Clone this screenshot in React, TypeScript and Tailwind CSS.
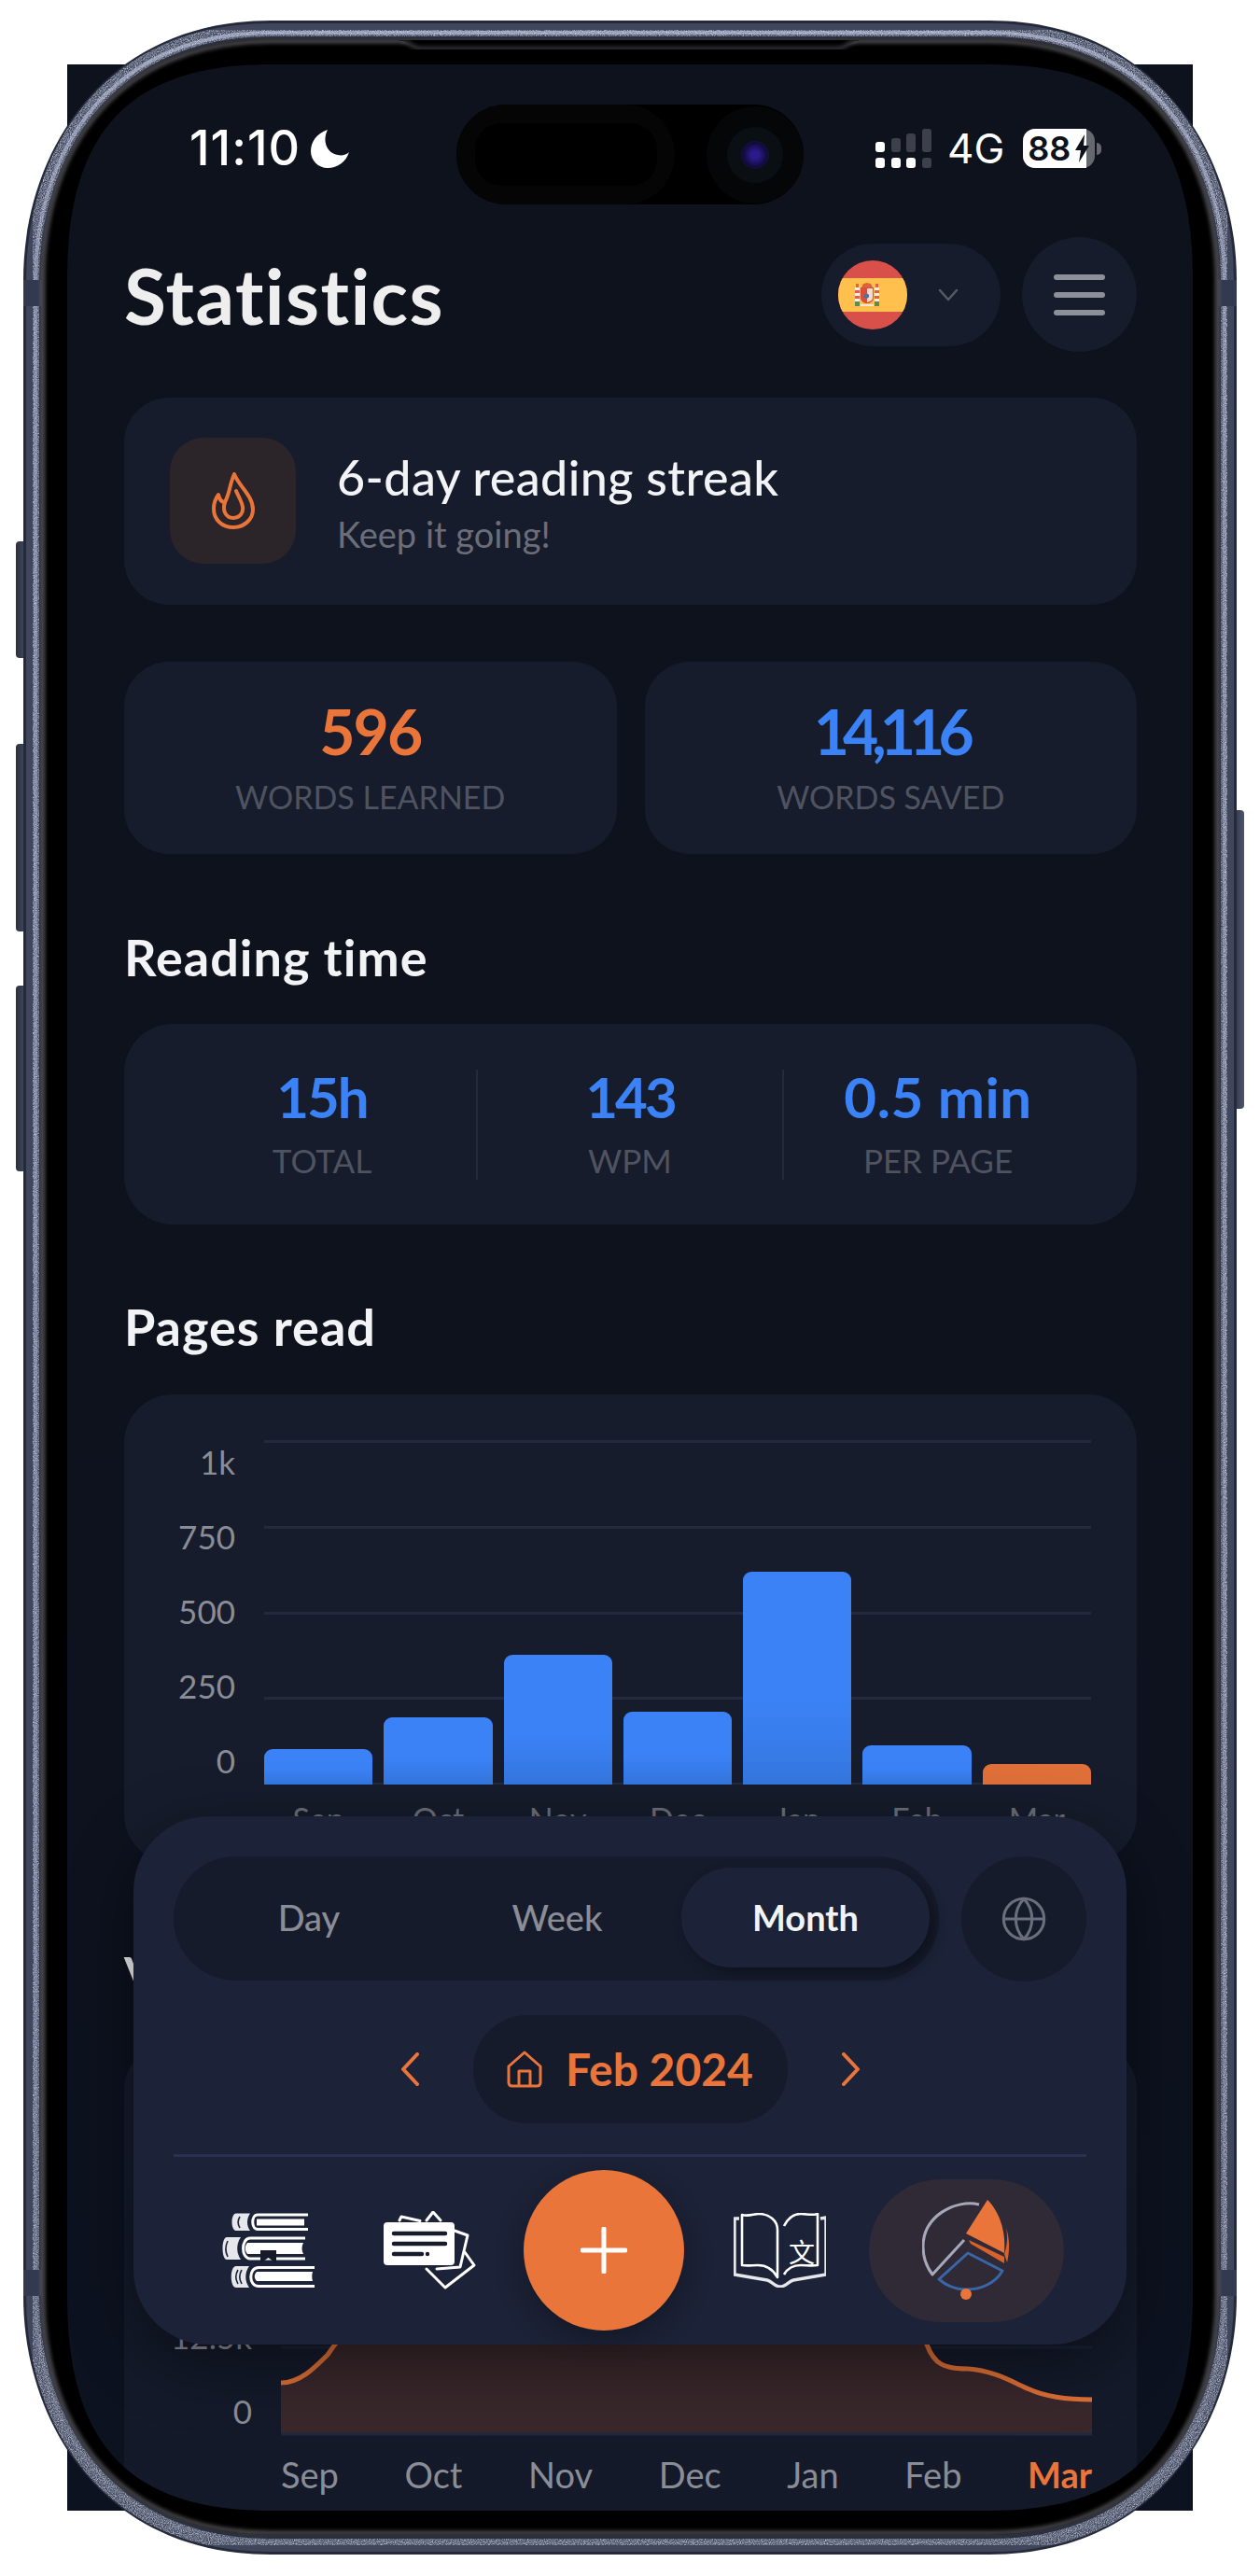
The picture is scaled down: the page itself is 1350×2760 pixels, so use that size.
import React from "react";
import { Globe } from "lucide-react";

const ORANGE = "#ea753b";

const rimOuter =
  "M25 300 C25 165 110 22 290 22 H1060 C1240 22 1325 165 1325 300 V2460 C1325 2595 1240 2737 1060 2737 H290 C110 2737 25 2595 25 2460 Z";
const rimMid =
  "M35 300 C35 165 115 32 290 32 H1060 C1235 32 1315 165 1315 300 V2460 C1315 2595 1235 2727 1060 2727 H290 C115 2727 35 2595 35 2460 Z";
const rimLight =
  "M38 300 C38 163 118 35 290 35 H1060 C1232 35 1312 163 1312 300 V2460 C1312 2597 1232 2724 1060 2724 H290 C118 2724 38 2597 38 2460 Z";
const rimInner =
  "M46 300 C46 160 125 42 290 42 H1060 C1225 42 1304 160 1304 300 V2460 C1304 2600 1225 2716 1060 2716 H290 C125 2716 46 2600 46 2460 Z";
const screenEdge =
  "M72 300 C72 150 130 69 290 69 H1060 C1220 69 1278 150 1278 300 V2460 C1278 2610 1220 2690 1060 2690 H290 C130 2690 72 2610 72 2460 Z";

function PhoneFrame() {
  return (
    <svg className="absolute left-0 top-0 pointer-events-none" width={1350} height={2760} viewBox="0 0 1350 2760">
      <defs>
        <filter id="soft" x="-5%" y="-5%" width="110%" height="110%">
          <feGaussianBlur stdDeviation="2" />
        </filter>
        <filter id="grain" x="0" y="0" width="100%" height="100%">
          <feTurbulence type="fractalNoise" baseFrequency="0.9" numOctaves="2" result="n" />
          <feColorMatrix in="n" type="matrix" values="0 0 0 0 0.72  0 0 0 0 0.76  0 0 0 0 0.88  0 0 0 1.6 -0.55" />
          <feComposite in2="SourceAlpha" operator="in" />
        </filter>
        <linearGradient id="btn" x1="0" y1="0" x2="1" y2="0">
          <stop offset="0" stopColor="#2a2f40" />
          <stop offset="1" stopColor="#4e556b" />
        </linearGradient>
        <linearGradient id="rim" gradientUnits="userSpaceOnUse" x1="0" y1="22" x2="0" y2="2737">
          <stop offset="0" stopColor="#8a92ad" />
          <stop offset="0.1" stopColor="#727a96" />
          <stop offset="0.75" stopColor="#666e88" />
          <stop offset="1" stopColor="#485064" />
        </linearGradient>
      </defs>
      <rect x="17" y="580" width="14" height="125" rx="4" fill="url(#btn)" />
      <rect x="17" y="797" width="14" height="201" rx="4" fill="url(#btn)" />
      <rect x="17" y="1056" width="14" height="199" rx="4" fill="url(#btn)" />
      <rect x="1319" y="868" width="14" height="320" rx="4" fill="url(#btn)" />
      <path d={rimOuter + " " + rimInner} fillRule="evenodd" fill="#252a3a" />
      <path d={rimMid} fill="none" stroke="#40475d" strokeWidth="14" />
      <path d={rimLight} fill="none" stroke="url(#rim)" strokeWidth="4" />
      <path d={rimMid} fill="none" stroke="#000" strokeWidth="14" filter="url(#grain)" />
      <rect x="25" y="300" width="21" height="28" fill="#333a4f" />
      <rect x="1304" y="300" width="21" height="28" fill="#333a4f" />
      <rect x="25" y="2432" width="21" height="28" fill="#333a4f" />
      <rect x="1304" y="2432" width="21" height="28" fill="#333a4f" />
      <path d={rimInner} fill="none" stroke="#141926" strokeWidth="3" />
      <path d={rimInner + " " + screenEdge} fillRule="evenodd" fill="#000" />
      <path d={rimInner + " " + screenEdge} fillRule="evenodd" fill="none" />
      <path d="M46 300C46 160 125 44 290 44H1060C1225 44 1304 160 1304 300V2460C1304 2600 1225 2714 1060 2714H290C125 2714 46 2600 46 2460Z" fill="none" stroke="#5a5a5e" strokeWidth="4" filter="url(#soft)" />
      {/* the small step in the bezel above the island */}
      <path d="M424 43C436 43 438 50 452 50H896C910 50 912 43 924 43Z" fill="#000" />
      <path d="M430 44C440 44 440 52 452 52H896C908 52 908 44 918 44" fill="none" stroke="#4a4a4e" strokeWidth="3" filter="url(#soft)" />
    </svg>
  );
}

function Moon() {
  return (
    <svg width="42" height="42" viewBox="0 0 42 42" className="ml-[11px]">
      <path d="M18 1C6 5 0 14 0 24C0 34 8 42 18 42C29 42 38 35 41 25C38 28 33 29 29 28C17 26 12 13 18 1Z" fill="#fff" />
    </svg>
  );
}

function SignalBars() {
  const gray = "#3d404a";
  return (
    <svg width="66" height="42" viewBox="0 0 66 42">
      <rect x="0" y="14" width="10" height="11" rx="3" fill="#fff" />
      <rect x="17" y="10" width="10" height="15" rx="3" fill={gray} />
      <rect x="33" y="5" width="10" height="20" rx="3" fill={gray} />
      <rect x="50" y="0" width="10" height="25" rx="3" fill={gray} />
      <rect x="0" y="31" width="10" height="11" rx="3" fill="#fff" />
      <rect x="17" y="31" width="10" height="11" rx="3" fill="#fff" />
      <rect x="33" y="31" width="10" height="11" rx="3" fill="#fff" />
      <rect x="50" y="31" width="10" height="11" rx="3" fill={gray} />
    </svg>
  );
}

function Battery() {
  return (
    <div className="flex items-center">
      <div className="relative flex h-[42px] w-[77px] items-center rounded-[13px] bg-[#666870]">
        <div className="flex h-full w-[68px] items-center rounded-l-[13px] bg-white pl-[5px]">
          <span className="font-['Inter',sans-serif] text-[36px] font-semibold leading-none text-[#0d111c]">88</span>
        </div>
        <svg width="16" height="30" viewBox="0 0 16 30" className="absolute left-[56px] top-[6px]">
          <path d="M10 0L0 17H6L4 30L15 12H9Z" fill="#0d111c" />
        </svg>
      </div>
      <div className="ml-[2px] h-[13px] w-[5px] rounded-r-full bg-[#666870]" />
    </div>
  );
}

function SpainFlag() {
  return (
    <svg width="74" height="74" viewBox="0 0 74 74">
      <defs>
        <clipPath id="flagclip">
          <circle cx="37" cy="37" r="37" />
        </clipPath>
      </defs>
      <g clipPath="url(#flagclip)">
        <rect width="74" height="74" fill="#d94f4a" />
        <rect y="19" width="74" height="36" fill="#ffc04d" />
        <path d="M18 29h5v3h-5zM18 35h5v3h-5zM18 41h5v3h-5zM39 29h5v3h-5zM39 35h5v3h-5zM39 41h5v3h-5z" fill="#f7efe6" />
        <path d="M18 32h5v3h-5zM18 38h5v3h-5zM39 32h5v3h-5zM39 38h5v3h-5zM19 25h3v4h-3zM40 25h3v4h-3z" fill="#e0603f" />
        <path d="M25 29L27 25L31 24L35 25L37 29Z" fill="#e0603f" />
        <path d="M24 29H38V40C38 44 34 46 31 46C28 46 24 44 24 40Z" fill="#d9503a" />
        <path d="M31 30H37V40C37 42 35 44 31 45Z" fill="#f6d9cf" />
        <circle cx="30.5" cy="38" r="2.6" fill="#3f7a9e" />
        <rect x="18" y="44" width="5" height="5" fill="#5d8a4f" />
        <rect x="39" y="44" width="5" height="5" fill="#5d8a4f" />
        <rect x="24" y="47" width="14" height="2" fill="#f2e6d8" />
      </g>
    </svg>
  );
}

function Flame() {
  return (
    <svg width="47" height="61" viewBox="0 0 47 61" fill="none" stroke={ORANGE} strokeWidth="4" strokeLinejoin="round" strokeLinecap="round">
      <path d="M25 2C30 15 45 25 45 40C45 51 35 59 24 59C12 59 3 51 3 39C3 33 5 28 8 24C9 29 11 32 15 32C20 23 20 13 25 2Z" />
      <path d="M15 32C12 41 16 49 24 49C31 49 35 43 34 37C33 31 29 25 27 20" />
    </svg>
  );
}

function BooksIcon() {
  const spine = "#e5e7eb";
  const gap = "#1c2237";
  return (
    <svg width="99" height="80" viewBox="0 0 99 80" className="shrink-0">
      <path d="M15 0.5H30C26 6 26 14 30 19H15C9 19 9 0.5 15 0.5Z" fill={spine} />
      <path d="M19 4C16.5 8 16.5 12 19 16" stroke={gap} strokeWidth="1.6" fill="none" />
      <path d="M92 2H38C31 2 31 17.5 38 17.5H92" fill="none" stroke="#fff" strokeWidth="3" />
      <rect x="37" y="6.5" width="51" height="7" fill="#fff" />
      <path d="M5 26H20C15 33 15 43 20 50H5C-1 50 -1 26 5 26Z" fill={spine} />
      <path d="M6 30C3 36 3 41 6 47" stroke={gap} strokeWidth="1.6" fill="none" />
      <path d="M89 27H30C20 27 20 49 30 49H89" fill="none" stroke="#fff" strokeWidth="3" />
      <path d="M27 32H87C85 36 85 40 87 44H27C24 40 24 36 27 32Z" fill="#fff" />
      <path d="M41 40H58V54L49.5 48L41 54Z" fill="#161b2c" />
      <path d="M15 57H29C24 64 24 73 29 80H15C8 80 8 57 15 57Z" fill={spine} />
      <path d="M17 61C14 66 14 71 17 76M21 61C18 66 18 71 21 76" stroke={gap} strokeWidth="1.6" fill="none" />
      <path d="M99 58.5H39C28 58.5 28 78.5 39 78.5H99" fill="none" stroke="#fff" strokeWidth="3" />
      <path d="M37 63H97C96 66 96 70 97 73H37C34 70 34 66 37 63Z" fill="#fff" />
    </svg>
  );
}

function CardsIcon() {
  return (
    <svg width="100" height="84" viewBox="0 0 100 84" className="shrink-0" fill="none" stroke="#fff" strokeWidth="3" strokeLinejoin="round" strokeLinecap="round">
      <path d="M18 10L20 6L40 10.5" />
      <path d="M47 10L54 1L62 10" />
      <path d="M77 21L91 26L83 60L58 62" />
      <path d="M88 44L98 58L67 82L47 62" />
      <rect x="1" y="12" width="76" height="46" rx="4" fill="#fff" stroke="none" />
      <path d="M12 24H67M12 35H67M12 46H42" stroke="#161b2c" strokeWidth="4.5" />
      <circle cx="48" cy="46" r="2.2" fill="#161b2c" stroke="none" />
    </svg>
  );
}

function TranslateBook() {
  return (
    <svg width="99" height="80" viewBox="0 0 99 80" className="shrink-0" fill="none" stroke="#fff" strokeWidth="2.6" strokeLinejoin="round">
      <path d="M9 2C16 4 22 1 27 1C38 1 47 8 47 18V69C42 60 34 56 26 56C20 56 15 57 9 56Z" />
      <path d="M54 14C58 6 64 1 72 1C78 1 84 3 90 1V56C84 57 78 56 72 56C64 56 58 59 54 66" />
      <path d="M6 6H1V66L36 72C41 73 44 79 50 79C56 79 59 73 64 72L99 66V5L93 6" stroke="#e5e7eb" strokeWidth="3.4" />
      <text x="59" y="53" fontSize="28" fill="#fff" stroke="none" fontFamily="'Noto Sans CJK SC', sans-serif">文</text>
    </svg>
  );
}

function PieIcon() {
  return (
    <svg width="96" height="108" viewBox="0 0 96 108" className="shrink-0" fill="none">
      <path d="M61 5C36 -1 1 17 1 50C1 62 5 72 11 80L45 43" stroke="#a6a7b8" strokeWidth="3" strokeLinejoin="round" />
      <path d="M70 0C82 12 90 32 88 57L47 36Z" fill={ORANGE} />
      <path d="M50 43L88 61L88 68L52 47Z" fill="#d9622a" />
      <path d="M90 30C94 42 94 55 91 67L88 58C91 50 92 40 90 30Z" fill="#d9622a" />
      <path d="M49 57L86 76C78 90 62 96 48 96C37 96 26 92 18 85Z" stroke="#3a66a8" strokeWidth="3" strokeLinejoin="round" />
      <circle cx="47" cy="101" r="6" fill={ORANGE} />
    </svg>
  );
}

function StatCard({ value, label, color }: { value: string; label: string; color: string }) {
  return (
    <div className="flex h-[206px] flex-1 flex-col items-center rounded-[48px] bg-[#161c2c] pt-[35px]">
      <span className={`text-[66px] font-bold leading-[80px] ${color}`}>{value}</span>
      <span className="mt-[9px] text-[34px] leading-[42px] text-[#4f5360]">{label}</span>
    </div>
  );
}

function TimeStat({ value, label, className, tracking }: { value: string; label: string; className: string; tracking: string }) {
  return (
    <div className={`flex flex-col items-center ${className}`}>
      <span className={`-mt-[5px] text-[60px] font-bold leading-[70px] text-[#3b82f6] ${tracking}`}>{value}</span>
      <span className="mt-[12px] text-[35px] leading-[42px] text-[#4f5360]">{label}</span>
    </div>
  );
}

const heading = "h-[60px] text-[54px] font-bold leading-[60px] tracking-[1px] text-[#f2f3f5]";
const months = ["Sep", "Oct", "Nov", "Dec", "Jan", "Feb", "Mar"];
const blueBar = "bg-gradient-to-b from-[#3b82f6] from-60% to-[#3577e0]";
const pagesBars = [
  { month: "Sep", h: "h-[38px]", bg: blueBar },
  { month: "Oct", h: "h-[72px]", bg: blueBar },
  { month: "Nov", h: "h-[139px]", bg: blueBar },
  { month: "Dec", h: "h-[78px]", bg: blueBar },
  { month: "Jan", h: "h-[228px]", bg: blueBar },
  { month: "Feb", h: "h-[42px]", bg: blueBar },
  { month: "Mar", h: "h-[22px]", bg: "bg-[#e0703a]" },
];

function PagesChart() {
  return (
    <div className="mt-[42px] h-[502px] rounded-[52px] bg-[#161c2c] pt-[49px]">
      <div className="flex">
        <div className="mt-[3px] flex w-[119px] flex-col items-end gap-[40px] text-[35px] leading-[40px] text-[#8a8d96]">
          <span>1k</span>
          <span>750</span>
          <span>500</span>
          <span>250</span>
          <span>0</span>
        </div>
        <div className="relative ml-[31px] h-[369px] w-[886px]">
          <div className="absolute inset-0 flex flex-col justify-between">
            <div className="h-[3px] bg-[#232a3e]" />
            <div className="h-[3px] bg-[#232a3e]" />
            <div className="h-[3px] bg-[#232a3e]" />
            <div className="h-[3px] bg-[#232a3e]" />
            <div className="h-[2px] bg-[#232a3e]" />
          </div>
          <div className="relative flex h-full items-end gap-[12px]">
            {pagesBars.map((b) => (
              <div key={b.month} className={`flex-1 rounded-t-[9px] ${b.h} ${b.bg}`} />
            ))}
          </div>
        </div>
      </div>
      <div className="ml-[150px] mt-[17px] flex w-[886px] gap-[12px] text-[34px] leading-[40px] text-[#6c6f79]">
        {months.map((m) => (
          <span key={m} className="flex-1 text-center">{m}</span>
        ))}
      </div>
    </div>
  );
}

function GrowthChart() {
  return (
    <div className="mt-[42px] h-[520px] rounded-t-[52px] bg-gradient-to-b from-[#161c2c] to-[#131929] pt-[50px]">
      <div className="flex">
        <div className="mt-[5px] flex w-[137px] flex-col items-end gap-[40px] text-[35px] leading-[40px] text-[#8a8d96]">
          <span>50k</span>
          <span>37.5k</span>
          <span>25k</span>
          <span>12.5k</span>
          <span>0</span>
        </div>
        <svg className="ml-[31px]" width="869" height="372" viewBox="0 0 869 372">
          <path d="M0 1.5H869M0 92H869M0 185H869M0 277H869" stroke="#1c2338" strokeWidth="3" />
          <path d="M0 315C20 315 35 300 50 285C70 255 85 245 100 225C200 80 300 60 400 60C600 60 670 200 692 274C700 295 710 300 736 300C765 302 785 315 802 322C815 328 835 333 869 333V370H0Z" fill="#39272c" />
          <path d="M0 370H869" stroke="#1f2a40" strokeWidth="3" />
          <path d="M0 315C20 315 35 300 50 285C70 255 85 245 100 225C200 80 300 60 400 60C600 60 670 200 692 274C700 295 710 300 736 300C765 302 785 315 802 322C815 328 835 333 869 333" fill="none" stroke="#dd6f35" strokeWidth="5" />
        </svg>
      </div>
      <div className="ml-[168px] mt-[21px] flex w-[869px] justify-between text-[38px] leading-[40px] text-[#8a8d96]">
        {months.map((m) => (
          <span key={m} className={m === "Mar" ? "font-bold text-[#ea753b]" : ""}>{m}</span>
        ))}
      </div>
    </div>
  );
}

function FloatingPanel() {
  return (
    <div className="absolute left-[71px] top-[1877px] h-[566px] w-[1064px] rounded-[80px] bg-[#1c2237] px-[43px] pt-[43px] shadow-[0_20px_70px_rgba(0,0,0,0.45)]">
      <div className="flex gap-[24px]">
        <div className="flex h-[133px] w-[821px] rounded-full bg-[#161b2c] pl-[12px] pt-[12px] text-[38px]">
          <div className="flex h-[107px] w-[266px] items-center justify-center font-medium text-[#8a8d96]">Day</div>
          <div className="flex h-[107px] w-[266px] items-center justify-center font-medium text-[#8a8d96]">Week</div>
          <div className="flex h-[107px] w-[266px] items-center justify-center rounded-full bg-[#1c2237] font-bold text-[#f2f3f5] shadow-[6px_6px_14px_rgba(0,0,0,0.35)]">
            Month
          </div>
        </div>
        <div className="flex h-[134px] w-[134px] items-center justify-center rounded-full bg-[#161b2c]">
          <Globe size={52} strokeWidth={1.4} color="#6b6f7c" />
        </div>
      </div>
      <div className="mt-[36px] flex items-center justify-center gap-[58px]">
        <svg width="20" height="36" viewBox="0 0 20 36" fill="none" stroke={ORANGE} strokeWidth="4" strokeLinecap="round" strokeLinejoin="round">
          <path d="M18 2L3 18L18 34" />
        </svg>
        <div className="flex h-[116px] w-[337px] items-center justify-center gap-[25px] rounded-full bg-[#161b2c]">
          <svg width="38" height="40" viewBox="0 0 38 40" fill="none" stroke={ORANGE} strokeWidth="3" strokeLinejoin="round">
            <path d="M2 17L19 2L36 17V34C36 37 34 38 32 38H6C4 38 2 37 2 34Z" />
            <path d="M13 38V22H25V38" />
          </svg>
          <span className="text-[48px] font-bold leading-none text-[#ea753b]">Feb 2024</span>
        </div>
        <svg width="20" height="36" viewBox="0 0 20 36" fill="none" stroke={ORANGE} strokeWidth="4" strokeLinecap="round" strokeLinejoin="round">
          <path d="M2 2L17 18L2 34" />
        </svg>
      </div>
      <div className="mt-[33px] h-[3px] bg-[#2a3150]" />
      <div className="mt-[14px] flex h-[172px] items-center pl-[52px]">
        <BooksIcon />
        <div className="ml-[73px]">
          <CardsIcon />
        </div>
        <button className="ml-[51px] flex h-[172px] w-[172px] shrink-0 items-center justify-center rounded-full bg-[#ea753b] shadow-[0_10px_30px_rgba(0,0,0,0.3)]">
          <svg width="50" height="50" viewBox="0 0 50 50" stroke="#fff" strokeWidth="5" strokeLinecap="round">
            <path d="M25 2V48M2 25H48" />
          </svg>
        </button>
        <div className="ml-[53px]">
          <TranslateBook />
        </div>
        <div className="ml-[46px] flex h-[153px] w-[209px] shrink-0 items-center justify-center rounded-full bg-[#2f2a36]">
          <PieIcon />
        </div>
      </div>
    </div>
  );
}

export default function App() {
  return (
    <div className="relative h-[2760px] w-[1350px] overflow-hidden bg-white font-['Lato',sans-serif]">
      <div className="absolute left-[72px] top-[69px] h-[2621px] w-[1206px] overflow-hidden bg-gradient-to-b from-[#0e121d] via-[#0e121d] to-[#0d1220]">
        {/* status bar, the island sits in the flow between the two sides */}
        <div className="flex pt-[43px]">
          <div className="flex h-[94px] w-[417px] items-center pl-[131px]">
            <span className="font-['Inter',sans-serif] text-[52px] font-medium leading-none tracking-[1px] text-white">11:10</span>
            <Moon />
          </div>
          <div className="flex h-[107px] w-[372px] items-center rounded-full bg-black">
            <div className="flex h-[107px] w-[234px] items-center justify-center rounded-full bg-[#050505]">
              <div className="h-[67px] w-[195px] rounded-[28px] bg-black" />
            </div>
            <div className="ml-[34px] flex h-[104px] w-[104px] items-center justify-center rounded-full bg-[#050608]">
              <div className="flex h-[60px] w-[60px] items-center justify-center rounded-full bg-[#0a0f14]">
                <div className="h-[30px] w-[30px] rounded-full bg-[radial-gradient(circle,#2a1a8a_20%,#120a3c_60%,#0b2a33_100%)]" />
              </div>
            </div>
          </div>
          <div className="flex h-[94px] items-center pl-[77px]">
            <SignalBars />
            <span className="ml-[11px] font-['Inter',sans-serif] text-[44px] leading-none text-white">4G</span>
            <div className="ml-[20px]">
              <Battery />
            </div>
          </div>
        </div>

        <div className="pl-[61px] pr-[60px]">
          <div className="mt-[35px] flex h-[123px] items-center justify-between">
            <h1 className="text-[82px] font-bold leading-none tracking-[1.4px] text-[#eeeeee]">Statistics</h1>
            <div className="flex items-center gap-[23px]">
              <div className="flex h-[110px] w-[192px] items-center rounded-full bg-[#161c2c] pl-[18px]">
                <SpainFlag />
                <svg className="ml-[33px]" width="22" height="14" viewBox="0 0 22 14" fill="none" stroke="#555b68" strokeWidth="2.5" strokeLinecap="round" strokeLinejoin="round">
                  <path d="M2 2L11 12L20 2" />
                </svg>
              </div>
              <div className="flex h-[123px] w-[123px] flex-col items-center justify-center gap-[13px] rounded-full bg-[#161c2c]">
                <div className="h-[6px] w-[55px] rounded-full bg-[#8d8f99]" />
                <div className="h-[6px] w-[55px] rounded-full bg-[#8d8f99]" />
                <div className="h-[6px] w-[55px] rounded-full bg-[#8d8f99]" />
              </div>
            </div>
          </div>

          <div className="mt-[49px] flex h-[222px] items-start rounded-[48px] bg-[#161c2c] pl-[49px] pt-[43px]">
            <div className="flex h-[135px] w-[135px] items-center justify-center rounded-[36px] bg-[#2b2429]">
              <Flame />
            </div>
            <div className="ml-[44px] pt-[12px]">
              <div className="text-[52px] font-medium leading-[60px] tracking-[0.4px] text-[#f2f3f5]">6-day reading streak</div>
              <div className="mt-[9px] text-[38px] leading-[44px] text-[#6b6e78]">Keep it going!</div>
            </div>
          </div>

          <div className="mt-[61px] flex gap-[30px]">
            <StatCard value="596" label="WORDS LEARNED" color="tracking-[-2px] text-[#ea753b]" />
            <StatCard value="14,116" label="WORDS SAVED" color="tracking-[-7px] text-[#3b82f6]" />
          </div>

          <h2 className={`mt-[81px] ${heading}`}>Reading time</h2>
          <div className="mt-[41px] flex h-[215px] items-center rounded-[52px] bg-[#161c2c]">
            <TimeStat value="15h" label="TOTAL" className="w-[377px] pl-[47px]" tracking="tracking-[-2px]" />
            <div className="h-[118px] w-[2px] bg-[#232a3e]" />
            <TimeStat value="143" label="WPM" className="w-[326px]" tracking="tracking-[-3px]" />
            <div className="h-[118px] w-[2px] bg-[#232a3e]" />
            <TimeStat value="0.5 min" label="PER PAGE" className="w-[330px]" tracking="tracking-[0.5px]" />
          </div>

          <h2 className={`mt-[80px] ${heading}`}>Pages read</h2>
          <PagesChart />

          <h2 className={`mt-[90px] ${heading}`}>Vocabulary</h2>
          <GrowthChart />
        </div>

        <FloatingPanel />
      </div>
      <PhoneFrame />
    </div>
  );
}
